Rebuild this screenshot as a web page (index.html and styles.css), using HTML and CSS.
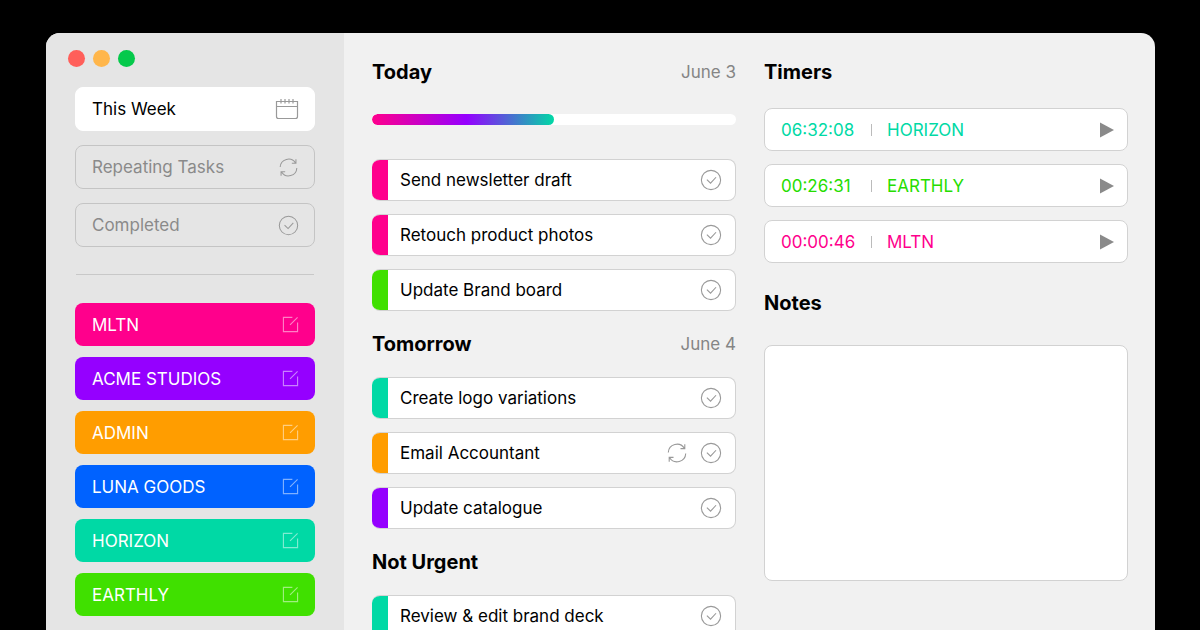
FILE: index.html
```html
<!DOCTYPE html>
<html lang="en">

<head>
    <meta charset="UTF-8">
    <meta name="viewport" content="width=device-width, initial-scale=1.0">
    <title>This Week</title>
    <link rel="stylesheet" href="styles.css">
</head>

<body>
    <!-- shared icons -->
    <svg class="sprite" aria-hidden="true">
        <symbol id="icon-calendar" viewBox="0 0 24 24">
            <path d="M4 4.5H1.500V19.500a2 2 0 0 0 2 2h17a2 2 0 0 0 2-2V4.500H20M1.500 9.500h21M6 2v4.500M10 2v4.500M14 2v4.500M18 2v4.500M4 4.500h16" />
        </symbol>
        <symbol id="icon-repeat" viewBox="0 0 24 24">
            <path d="M2.500 11.500A9.500 9.500 0 0 1 20 6.800M20.500 2.500v4.700h-4.700M21.500 12.500A9.500 9.500 0 0 1 4 17.200M3.500 21.500v-4.700h4.700" />
        </symbol>
        <symbol id="icon-check" viewBox="0 0 24 24">
            <circle cx="12" cy="12" r="10.500" />
            <path d="M7.500 11.500l4 4 6-6.500" />
        </symbol>
        <symbol id="icon-edit" viewBox="0 0 18 18">
            <path d="M11 1.500H1.500v15h15V7M8.500 9.500l8-8" />
        </symbol>
        <symbol id="icon-play" viewBox="0 0 14 16">
            <path d="M0 .5v15L14 8z" />
        </symbol>
    </svg>

    <div class="window">
        <aside class="sidebar">
            <div class="dots">
                <span class="dot red"></span>
                <span class="dot yellow"></span>
                <span class="dot green"></span>
            </div>

            <nav class="views">
                <a class="view active" href="#week">This Week <svg class="icon calendar"><use href="#icon-calendar" /></svg></a>
                <a class="view" href="#repeating">Repeating Tasks <svg class="icon small"><use href="#icon-repeat" /></svg></a>
                <a class="view" href="#completed">Completed <svg class="icon small"><use href="#icon-check" /></svg></a>
            </nav>

            <hr class="divider">

            <ul class="clients">
                <li class="client pink"><a href="#mltn">MLTN</a><button type="button" aria-label="Edit MLTN"><svg class="icon edit"><use href="#icon-edit" /></svg></button></li>
                <li class="client purple"><a href="#acme">ACME STUDIOS</a><button type="button" aria-label="Edit ACME STUDIOS"><svg class="icon edit"><use href="#icon-edit" /></svg></button></li>
                <li class="client orange"><a href="#admin">ADMIN</a><button type="button" aria-label="Edit ADMIN"><svg class="icon edit"><use href="#icon-edit" /></svg></button></li>
                <li class="client blue"><a href="#luna">LUNA GOODS</a><button type="button" aria-label="Edit LUNA GOODS"><svg class="icon edit"><use href="#icon-edit" /></svg></button></li>
                <li class="client teal"><a href="#horizon">HORIZON</a><button type="button" aria-label="Edit HORIZON"><svg class="icon edit"><use href="#icon-edit" /></svg></button></li>
                <li class="client lime"><a href="#earthly">EARTHLY</a><button type="button" aria-label="Edit EARTHLY"><svg class="icon edit"><use href="#icon-edit" /></svg></button></li>
            </ul>
        </aside>

        <main class="main">
            <section class="tasks">
                <div class="heading">
                    <h2>Today</h2>
                    <span class="date">June 3</span>
                </div>
                <progress class="progress" value="50" max="100" aria-label="Today's progress"></progress>
                <ul class="task-list">
                    <li class="task">
                        <span class="tag pink"></span>
                        <label for="task1">Send newsletter draft</label>
                        <span class="check"><input type="checkbox" id="task1"><svg class="icon"><use href="#icon-check" /></svg></span>
                    </li>
                    <li class="task">
                        <span class="tag pink"></span>
                        <label for="task2">Retouch product photos</label>
                        <span class="check"><input type="checkbox" id="task2"><svg class="icon"><use href="#icon-check" /></svg></span>
                    </li>
                    <li class="task">
                        <span class="tag lime"></span>
                        <label for="task3">Update Brand board</label>
                        <span class="check"><input type="checkbox" id="task3"><svg class="icon"><use href="#icon-check" /></svg></span>
                    </li>
                </ul>

                <div class="heading">
                    <h2>Tomorrow</h2>
                    <span class="date">June 4</span>
                </div>
                <ul class="task-list">
                    <li class="task">
                        <span class="tag teal"></span>
                        <label for="task4">Create logo variations</label>
                        <span class="check"><input type="checkbox" id="task4"><svg class="icon"><use href="#icon-check" /></svg></span>
                    </li>
                    <li class="task">
                        <span class="tag orange"></span>
                        <label for="task5">Email Accountant</label>
                        <svg class="icon"><use href="#icon-repeat" /></svg>
                        <span class="check"><input type="checkbox" id="task5"><svg class="icon"><use href="#icon-check" /></svg></span>
                    </li>
                    <li class="task">
                        <span class="tag purple"></span>
                        <label for="task6">Update catalogue</label>
                        <span class="check"><input type="checkbox" id="task6"><svg class="icon"><use href="#icon-check" /></svg></span>
                    </li>
                </ul>

                <div class="heading">
                    <h2>Not Urgent</h2>
                </div>
                <ul class="task-list">
                    <li class="task">
                        <span class="tag teal"></span>
                        <label for="task7">Review &amp; edit brand deck</label>
                        <span class="check"><input type="checkbox" id="task7"><svg class="icon"><use href="#icon-check" /></svg></span>
                    </li>
                </ul>
            </section>

            <section class="side">
                <div class="heading">
                    <h2>Timers</h2>
                </div>
                <ul class="timers">
                    <li class="timer teal-text">
                        <span class="time">06:32:08</span>
                        <span class="name">HORIZON</span>
                        <button type="button" aria-label="Start HORIZON timer"><svg class="play"><use href="#icon-play" /></svg></button>
                    </li>
                    <li class="timer lime-text">
                        <span class="time">00:26:31</span>
                        <span class="name">EARTHLY</span>
                        <button type="button" aria-label="Start EARTHLY timer"><svg class="play"><use href="#icon-play" /></svg></button>
                    </li>
                    <li class="timer pink-text">
                        <span class="time">00:00:46</span>
                        <span class="name">MLTN</span>
                        <button type="button" aria-label="Start MLTN timer"><svg class="play"><use href="#icon-play" /></svg></button>
                    </li>
                </ul>

                <div class="heading notes-heading">
                    <h2><label for="notes">Notes</label></h2>
                </div>
                <textarea class="notes" id="notes"></textarea>
            </section>
        </main>
    </div>
</body>

</html>
```
FILE: styles.css
```css
* {
    box-sizing: border-box;
}

body {
    margin: 0;
    height: 100vh;
    padding: 33px 45px 0 46px;
    overflow: hidden;
    background: #000;
    color: #000;
    font-family: Inter, "Liberation Sans", sans-serif;
    font-size: 17px;
    line-height: 26px;
}

h2 {
    margin: 0;
    font-size: 20px;
    font-weight: 700;
    line-height: 26px;
}

ul {
    margin: 0;
    padding: 0;
    list-style: none;
}

a {
    color: inherit;
    text-decoration: none;
}

button {
    display: flex;
    padding: 0;
    border: 0;
    background: none;
    color: inherit;
    cursor: pointer;
}

.sprite {
    display: none;
}

.icon {
    width: 22px;
    height: 22px;
    flex: none;
    fill: none;
    stroke: #999;
    stroke-width: 1.2;
}

.icon.small {
    width: 21px;
    height: 21px;
}

.icon.calendar {
    width: 24px;
    height: 24px;
}

.icon.edit {
    width: 17px;
    height: 17px;
    stroke: #fff;
    opacity: 0.5;
}

.window {
    display: flex;
    min-height: 100%;
    border-radius: 14px 14px 0 0;
    overflow: hidden;
    background: #f1f1f1;
}

/* sidebar */
.sidebar {
    flex: none;
    width: 298px;
    padding: 17px 29px;
    background: #e5e5e5;
}

.dots {
    display: flex;
    gap: 8px;
    margin: 0 -7px 20px;
}

.dot {
    width: 17px;
    height: 17px;
    border-radius: 50%;
}

.red {
    background: #ff5f5a;
}

.yellow {
    background: #ffb64b;
}

.green {
    background: #05c94b;
}

.views {
    display: grid;
    gap: 14px;
}

.view {
    display: flex;
    align-items: center;
    justify-content: space-between;
    height: 44px;
    padding: 0 15px 0 16px;
    border: 1px solid #c4c4c4;
    border-radius: 8px;
    color: #8a8a8a;
}

.view.active {
    background: #fff;
    border-color: #fff;
    color: #000;
}

.divider {
    height: 1px;
    margin: 27px 1px 28px;
    border: 0;
    background: #c8c8c8;
}

.clients {
    display: grid;
    gap: 11px;
}

.client {
    display: flex;
    align-items: center;
    justify-content: space-between;
    height: 43px;
    padding: 0 16px 0 17px;
    border-radius: 8px;
    color: #fff;
}

.pink {
    background: #ff008c;
}

.purple {
    background: #9500ff;
}

.orange {
    background: #ff9d00;
}

.blue {
    background: #0062ff;
}

.teal {
    background: #00d9a5;
}

.lime {
    background: #40e000;
}

/* columns */
.main {
    flex: 1;
    display: grid;
    grid-template-columns: 1fr 1fr;
    gap: 28px;
    padding: 26px 27px 0 28px;
}

.heading {
    display: flex;
    align-items: center;
    justify-content: space-between;
}

.date {
    color: #858585;
}

.progress {
    display: block;
    width: 100%;
    height: 11px;
    margin: 29px 0 34px;
    border: 0;
    border-radius: 6px;
    overflow: hidden;
    background: #fff;
    appearance: none;
}

.progress::-webkit-progress-bar {
    background: #fff;
}

.progress::-webkit-progress-value {
    border-radius: 6px;
    background: linear-gradient(to right, #ff008c, #9500ff 52%, #00d9a5);
}

.task-list {
    display: grid;
    gap: 13px;
}

.task-list + .heading {
    margin: 20px 0;
}

.task {
    display: flex;
    align-items: center;
    gap: 12px;
    height: 42px;
    padding-right: 13px;
    border: 1px solid #d2d2d2;
    border-left: 0;
    border-radius: 8px;
    overflow: hidden;
    background: #fff;
}

.task label {
    flex: 1;
}

.tag {
    width: 16px;
    height: 42px;
}

.check {
    position: relative;
    display: flex;
}

.check input {
    position: absolute;
    inset: 0;
    width: 100%;
    height: 100%;
    margin: 0;
    opacity: 0;
    cursor: pointer;
}

.check input:checked + .icon {
    stroke: #00d9a5;
}

/* timers and notes */
.timers {
    display: grid;
    gap: 13px;
    margin: 23px 0 27px;
}

.timer {
    display: flex;
    align-items: center;
    height: 43px;
    padding: 0 13px 0 16px;
    border: 1px solid #d2d2d2;
    border-radius: 8px;
    background: #fff;
}

.time {
    width: 90px;
}

.name {
    flex: 1;
    display: flex;
    align-items: center;
    gap: 15px;
}

.name::before {
    content: "";
    width: 1px;
    height: 12px;
    background: #bbb;
}

.teal-text {
    color: #00d9a5;
}

.lime-text {
    color: #26dd00;
}

.pink-text {
    color: #ff008c;
}

.play {
    width: 14px;
    height: 16px;
    fill: #8a8a8a;
}

.notes {
    display: block;
    width: 100%;
    height: 236px;
    margin-top: 29px;
    padding: 12px 16px;
    border: 1px solid #d2d2d2;
    border-radius: 8px;
    background: #fff;
    font: inherit;
    resize: none;
}
```
